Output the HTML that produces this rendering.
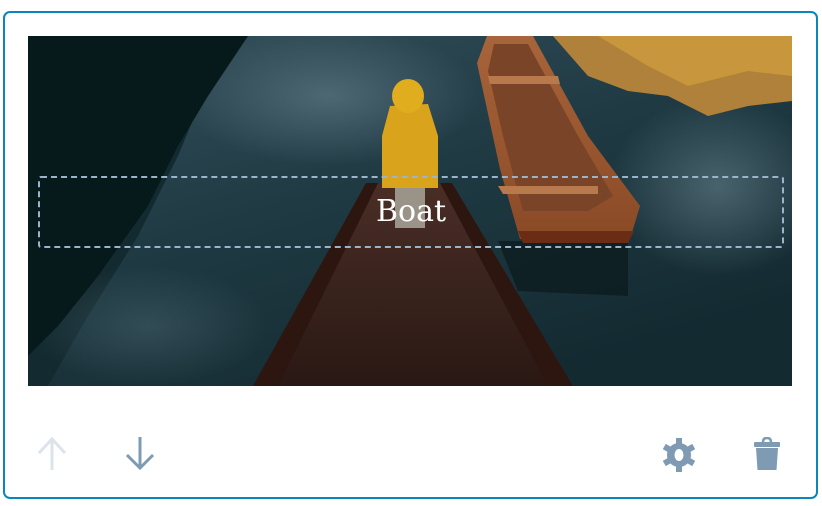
<!DOCTYPE html>
<html><head><meta charset="utf-8"><style>
html,body{margin:0;padding:0;background:#fff;width:822px;height:506px;overflow:hidden}
.card{position:absolute;left:3px;top:11px;width:811px;height:484px;border:2px solid #0a86bd;border-radius:7px;box-sizing:content-box}
.img{position:absolute;left:28px;top:36px;width:764px;height:350px;overflow:hidden;background:#0c2227}
.box{position:absolute;left:38px;top:176px;width:742px;height:68px;border:2px dashed #9bb4cb;border-radius:3px}
.label{position:absolute;left:0;top:176px;width:822px;text-align:center;font:30px "DejaVu Serif","Liberation Serif",serif;color:#fff;line-height:72px}
svg.i{position:absolute}
</style></head><body>
<div class="card"></div>
<div class="img">
<svg width="764" height="350" viewBox="0 0 764 350">
<defs>
<linearGradient id="w" x1="0" y1="0" x2="0.6" y2="1"><stop offset="0" stop-color="#34505c"/><stop offset="0.5" stop-color="#1f3a43"/><stop offset="1" stop-color="#142a31"/></linearGradient>
<linearGradient id="p" x1="0" y1="0" x2="0" y2="1"><stop offset="0" stop-color="#4a2e26"/><stop offset="1" stop-color="#2a1814"/></linearGradient>
<linearGradient id="b" x1="0" y1="0" x2="0" y2="1"><stop offset="0" stop-color="#a8643a"/><stop offset="1" stop-color="#8a4a26"/></linearGradient>
<radialGradient id="r1" cx="0.5" cy="0.5" r="0.5"><stop offset="0" stop-color="#5d7783" stop-opacity="0.7"/><stop offset="1" stop-color="#5d7783" stop-opacity="0"/></radialGradient>
</defs>
<rect width="764" height="350" fill="#132a30"/>
<path d="M200 0 L764 0 L764 350 L20 350 L60 280 L110 200 L150 120 Z" fill="url(#w)"/>
<ellipse cx="300" cy="60" rx="150" ry="70" fill="url(#r1)"/>
<ellipse cx="690" cy="150" rx="110" ry="90" fill="url(#r1)"/>
<ellipse cx="120" cy="290" rx="120" ry="60" fill="url(#r1)" opacity="0.5"/>
<path d="M0 0 L220 0 L180 60 L150 110 L120 170 L70 240 L30 290 L0 320 Z" fill="#061a1c"/>
<path d="M525 0 L764 0 L764 65 L720 70 L680 80 L640 60 L600 55 L560 40 Z" fill="#b0813a"/>
<path d="M570 0 L764 0 L764 40 L720 35 L660 50 L620 30 Z" fill="#c8963c"/>
<path d="M340 147 L421 147 L540 350 L225 350 Z" fill="url(#p)"/>
<path d="M338 147 L350 147 L250 350 L225 350 Z" fill="#2e1610"/>
<path d="M412 147 L424 147 L545 350 L520 350 Z" fill="#2e1610"/>
<path d="M470 205 L600 205 L600 260 L490 255 Z" fill="#0b1a1d" opacity="0.7"/>
<path d="M459 0 L505 0 L560 100 L612 170 L602 203 L492 203 L472 133 L449 27 Z" fill="url(#b)"/>
<path d="M466 8 L500 8 L550 100 L585 160 L560 175 L495 175 L475 100 L460 35 Z" fill="#7a4428"/>
<path d="M460 40 L530 40 L532 48 L462 48 Z M470 150 L570 150 L570 158 L475 158 Z" fill="#b87a4c"/>
<path d="M490 195 L606 195 L600 207 L495 207 Z" fill="#6a2c14"/>
<path d="M362 70 L400 68 L410 100 L410 152 L354 152 L354 100 Z" fill="#d9a41c"/>
<ellipse cx="380" cy="60" rx="16" ry="17" fill="#e0ad1f"/>
<rect x="367" y="152" width="30" height="40" fill="#9a9488"/>
</svg>
</div>
<div class="box"></div>
<div class="label">Boat</div>
<svg class="i" style="left:36px;top:437px" width="32" height="34" viewBox="0 0 32 34"><path d="M16 2 V33 M3 16 L16 2 L29 16" fill="none" stroke="#dce3ea" stroke-width="3"/></svg>
<svg class="i" style="left:124px;top:437px" width="32" height="34" viewBox="0 0 32 34"><path d="M16 0 V31 M3 18 L16 31 L29 18" fill="none" stroke="#7f9ab3" stroke-width="3"/></svg>
<svg class="i" style="left:661px;top:437px" width="36" height="36" viewBox="0 0 36 36"><g fill="#7f9ab3"><circle cx="18" cy="18" r="12"/><rect x="15" y="1" width="6" height="34"/><rect x="15" y="1" width="6" height="34" transform="rotate(60 18 18)"/><rect x="15" y="1" width="6" height="34" transform="rotate(120 18 18)"/></g><ellipse cx="18" cy="18" rx="4.5" ry="6" fill="#fff"/></svg>
<svg class="i" style="left:752px;top:437px" width="30" height="34" viewBox="0 0 30 34"><path d="M11 5 Q11 1 15 1 Q19 1 19 5" fill="none" stroke="#7f9ab3" stroke-width="2.5"/><rect x="2" y="5" width="26" height="5" rx="1" fill="#7f9ab3"/><path d="M4 11 H26 L24.5 33 H5.5 Z" fill="#7f9ab3"/></svg>
</body></html>
